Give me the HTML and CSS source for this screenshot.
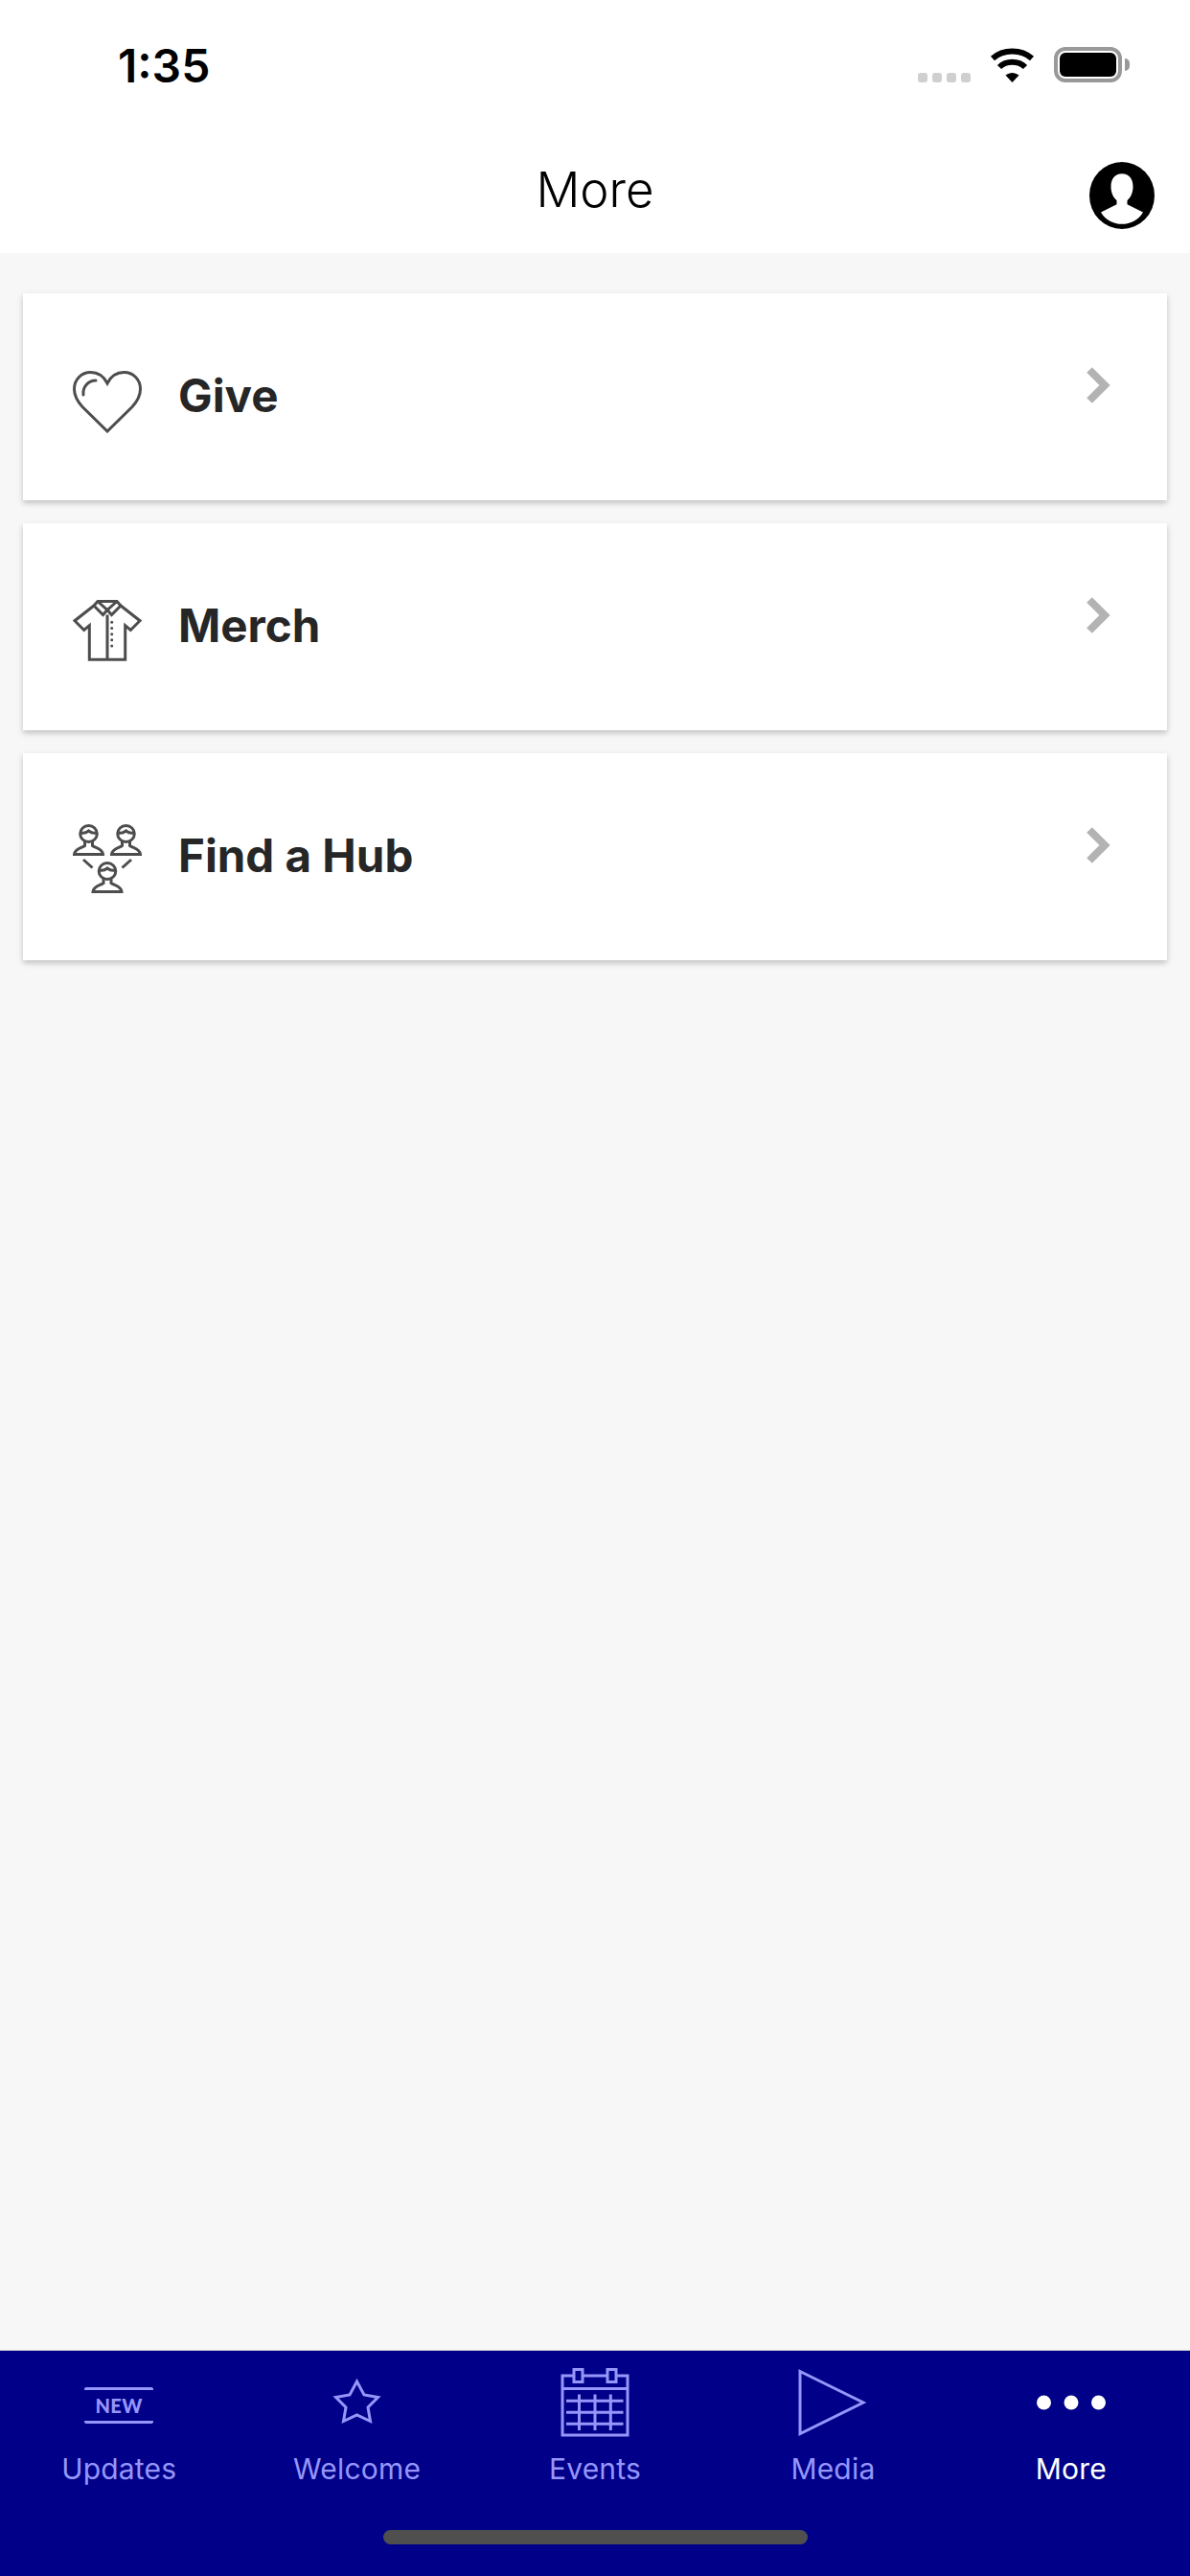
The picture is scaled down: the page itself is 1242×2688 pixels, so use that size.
FILE: index.html
```html
<!DOCTYPE html>
<html lang="en">
<head>
  <meta charset="UTF-8">
  <meta name="viewport" content="width=device-width, initial-scale=1.0">
  <title>More</title>
  <link rel="stylesheet" href="styles.css">
</head>
<body>
  <div class="page">
    <header class="top">
      <div class="status">
        <span class="time">1:35</span>
        <div class="status-icons">
          <div class="signal"><i></i><i></i><i></i><i></i></div>
          <svg class="wifi" width="47" height="36" viewBox="0 0 47 36">
            <path d="M3 11C14 1 33 1 44 11M10 20C17 13 30 13 37 20" fill="none" stroke="#000" stroke-width="6"/>
            <path d="M23.5 36L16.5 28.5C21 25 26 25 30.5 28.5Z" fill="#000"/>
          </svg>
          <div class="battery"><div class="battery-fill"></div></div>
        </div>
      </div>
      <div class="nav">
        <h1 class="title">More</h1>
        <svg class="avatar" width="68" height="70" viewBox="0 0 68 68" preserveAspectRatio="none">
          <circle cx="34" cy="34" r="34" fill="#000"/>
          <path d="M34 12C26.5 12 22.5 17.5 22.5 25C22.5 30 24 35 28.5 39V43L12 51C17 59 25 63 34 63C43 63 51 59 56 51L39.5 43V39C44 35 45.5 30 45.5 25C45.5 17.5 41.5 12 34 12Z" fill="#fff"/>
        </svg>
      </div>
    </header>

    <main class="list">
      <div class="card">
        <svg class="card-icon" width="72" height="72" viewBox="0 0 72 72">
          <path d="M36 20C32 12 25 8.500 18.500 8.500C9 8.500 1.500 16 1.500 26C1.500 33 5 39 10 44.500L36 70L62 44.500C67 39 70.500 33 70.500 26C70.500 16 63 8.500 53.500 8.500C47 8.500 40 12 36 20Z"/>
          <path d="M11 32C10 24 16 17 24 17" stroke-linecap="round"/>
        </svg>
        <span class="card-label">Give</span>
        <svg class="chevron" width="26" height="38" viewBox="0 0 26 38">
          <path d="M3 3L19 19L3 35" fill="none" stroke="#b3b3b3" stroke-width="8"/>
        </svg>
      </div>

      <div class="card">
        <svg class="card-icon" width="72" height="72" viewBox="0 0 72 72">
          <path d="M22 12L2 27.700L11.700 37.500L17.300 32.700V68.300H54.700V32.700L60.300 37.500L70 27.700L50 12"/>
          <path d="M26 7.500H46L50 12L40.500 21.500L36 16.500L31.500 21.500L22 12Z"/>
          <path d="M26 7.500L36 16.500L46 7.500M36 21.500V68"/>
          <g class="buttons">
            <circle cx="40.700" cy="29.300" r="1.500"/>
            <circle cx="40.700" cy="35.600" r="1.500"/>
            <circle cx="40.700" cy="41.700" r="1.500"/>
            <circle cx="40.700" cy="47.800" r="1.500"/>
            <circle cx="40.700" cy="54" r="1.500"/>
          </g>
        </svg>
        <span class="card-label">Merch</span>
        <svg class="chevron" width="26" height="38" viewBox="0 0 26 38">
          <path d="M3 3L19 19L3 35" fill="none" stroke="#b3b3b3" stroke-width="8"/>
        </svg>
      </div>

      <div class="card">
        <svg class="card-icon" width="72" height="72" viewBox="0 0 72 72">
          <defs>
            <g id="person">
              <ellipse cx="16.500" cy="10" rx="8.800" ry="8.500"/>
              <path d="M8 9C12 10 14 9 16.500 7C19 9 21 10 25 9"/>
              <path d="M12.500 18V22.500C9 25 2 25.500 1.500 31.500H31.500C31 25.500 24 25 20.500 22.500V18"/>
            </g>
          </defs>
          <use href="#person"/>
          <use href="#person" x="39"/>
          <use href="#person" x="19.500" y="39"/>
          <path d="M11 37L20.500 45.500M61 37L51.500 45.500"/>
        </svg>
        <span class="card-label">Find a Hub</span>
        <svg class="chevron" width="26" height="38" viewBox="0 0 26 38">
          <path d="M3 3L19 19L3 35" fill="none" stroke="#b3b3b3" stroke-width="8"/>
        </svg>
      </div>
    </main>

    <footer class="tabbar">
      <div class="tabs">
        <div class="tab">
          <div class="tab-icon">
            <div class="new-badge">NEW</div>
          </div>
          <span class="tab-label">Updates</span>
        </div>
        <div class="tab">
          <svg class="tab-icon" width="72" height="72" viewBox="0 0 72 72">
            <path class="line" d="M35.500 14L43 28L57.500 30.500L47 41L49.500 55.500L35.500 49L21.500 55.500L24 41L13.500 30.500L28 28Z"/>
          </svg>
          <span class="tab-label">Welcome</span>
        </div>
        <div class="tab">
          <svg class="tab-icon" width="72" height="72" viewBox="0 0 72 72">
            <path class="line" d="M2 8H70V70H2ZM2 21.500H70M6 34.300H65.500M6 46.300H65.500M6 58.300H65.500M19.500 27.500V65M36 27.500V65M52.300 27.500V65"/>
            <rect class="ring" x="14" y="1.500" width="9" height="13"/>
            <rect class="ring" x="49" y="1.500" width="9" height="13"/>
          </svg>
          <span class="tab-label">Events</span>
        </div>
        <div class="tab">
          <svg class="tab-icon" width="72" height="72" viewBox="0 0 72 72">
            <path class="line" d="M2 3.500L68 36L2 68.500Z"/>
          </svg>
          <span class="tab-label">Media</span>
        </div>
        <div class="tab tab-active">
          <svg class="tab-icon" width="72" height="72" viewBox="0 0 72 72">
            <circle cx="7.500" cy="36" r="7.500" fill="#fff"/>
            <circle cx="36" cy="36" r="7.500" fill="#fff"/>
            <circle cx="64.500" cy="36" r="7.500" fill="#fff"/>
          </svg>
          <span class="tab-label">More</span>
        </div>
      </div>
      <div class="home-bar"></div>
    </footer>
  </div>
</body>
</html>
```

FILE: styles.css
```css
* {
  box-sizing: border-box;
}
body {
  margin: 0;
  font-family: Inter, "Liberation Sans", sans-serif;
  background: #f7f7f7;
  color: #000;
}
.page {
  display: flex;
  flex-direction: column;
  height: 2688px;
}

/* top area */
.top {
  background: #fff;
  height: 264px;
}
.status {
  display: flex;
  justify-content: space-between;
  align-items: flex-start;
  height: 152px;
  padding: 40px 71px 0 123px;
}
.time {
  font-size: 48px;
  font-weight: 600;
  line-height: 58px;
}
.status-icons {
  display: flex;
  align-items: flex-end;
  margin-top: 9px;
}
.signal {
  display: flex;
  gap: 5px;
  margin-right: 20px;
}
.signal i {
  width: 10px;
  height: 10px;
  border-radius: 3px;
  background: #cfcfcf;
}
.wifi {
  margin-right: 20px;
}
.battery {
  position: relative;
  width: 71px;
  height: 37px;
  padding: 2px;
  border: 4px solid #999;
  border-radius: 12px;
}
.battery::after {
  content: "";
  position: absolute;
  top: 8px;
  right: -12px;
  width: 5px;
  height: 13px;
  border-radius: 0 6px 6px 0;
  background: #999;
}
.battery-fill {
  height: 100%;
  border-radius: 6px;
  background: #000;
}
.nav {
  position: relative;
  display: flex;
  justify-content: center;
}
.title {
  margin: 16px 0 0;
  font-size: 51px;
  font-weight: 300;
  line-height: 60px;
}
.avatar {
  position: absolute;
  top: 17px;
  right: 37px;
}

/* cards */
.list {
  flex: 1;
  display: flex;
  flex-direction: column;
  gap: 24px;
  padding: 42px 24px 0;
}
.card {
  display: flex;
  align-items: center;
  height: 216px;
  padding: 0 58px 0 52px;
  background: #fff;
  box-shadow: 0 3px 6px rgba(0,0,0,0.22);
}
.card-icon {
  margin-top: 4px;
  margin-right: 38px;
  fill: none;
  stroke: #4d4d4d;
  stroke-width: 3;
  flex: none;
}
.buttons {
  fill: #4d4d4d;
  stroke: none;
}
.card-label {
  flex: 1;
  margin-bottom: 4px;
  font-size: 47.5px;
  font-weight: 700;
  color: #262626;
}
.chevron {
  margin-bottom: 24px;
}

/* bottom tabs */
.tabbar {
  height: 236px;
  background: #000088;
  border-top: 1px solid #ccc;
}
.tabs {
  display: flex;
  padding-top: 18px;
}
.tab {
  flex: 1;
  display: flex;
  flex-direction: column;
  align-items: center;
  color: #9696fa;
}
.tab-active {
  color: #fff;
}
.tab-icon {
  display: flex;
  align-items: center;
  justify-content: center;
  width: 72px;
  height: 72px;
}
.line {
  fill: none;
  stroke: #9696fa;
  stroke-width: 3;
}
.ring {
  fill: #000088;
  stroke: #9696fa;
  stroke-width: 3;
}
.new-badge {
  width: 72px;
  margin-top: 5px;
  padding: 6px 0;
  border-top: 3px solid #9696fa;
  border-bottom: 3px solid #9696fa;
  border-radius: 2px;
  font-family: Lato, sans-serif;
  font-size: 20px;
  font-weight: 900;
  line-height: 20px;
  text-align: center;
  letter-spacing: 0.5px;
}
.tab-label {
  margin-top: 13px;
  font-size: 30px;
  line-height: 40px;
  letter-spacing: 0.2px;
}
.home-bar {
  width: 443px;
  height: 15px;
  margin: 44px auto 0;
  border-radius: 8px;
  background: #4f4f4f;
}
```
